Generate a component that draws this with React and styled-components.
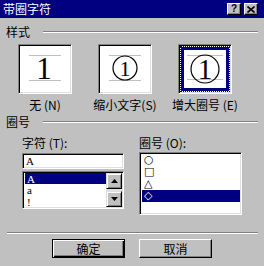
import styled, { createGlobalStyle } from "styled-components";

const GlobalStyle = createGlobalStyle`
  html, body {
    margin: 0;
    padding: 0;
    background: #c0c0c0;
  }
  body {
    font-family: "Noto Sans CJK SC", "DejaVu Sans", sans-serif;
    font-size: 12px;
    color: #000;
  }
`;

const Window = styled.div`
  width: 264px;
  height: 266px;
  background: #c0c0c0;
  overflow: hidden;
  display: flex;
  flex-direction: column;
`;

const TitleBar = styled.div`
  height: 18px;
  background: #000080;
  color: #fff;
  display: flex;
  align-items: center;
  justify-content: space-between;
  padding: 0 6px 0 3px;
  line-height: 12px;
`;

const TitleText = styled.span`
  font-size: 12px;
`;

const TitleButtons = styled.div`
  display: flex;
  gap: 3px;
`;

const TitleButton = styled.div`
  width: 14px;
  height: 12px;
  box-sizing: border-box;
  background: #c0c0c0;
  border: 1px solid;
  border-color: #fff #000 #000 #fff;
  box-shadow: inset -1px -1px #808080;
  display: flex;
  align-items: center;
  justify-content: center;
  color: #000;
  font-family: "Liberation Sans", sans-serif;
  font-weight: bold;
  font-size: 10px;
  line-height: 10px;
`;

const GroupHeader = styled.div`
  display: flex;
  align-items: center;
  height: 12px;
  padding: 0 6px;
  margin-top: ${(p) => p.$top}px;
`;

const GroupLabel = styled.span`
  line-height: 12px;
  margin-right: 13px;
`;

const Groove = styled.div`
  flex: 1;
  border-top: 1px solid #808080;
  border-bottom: 1px solid #fff;
`;

const StyleRow = styled.div`
  display: grid;
  grid-template-columns: 80px 80px 80px;
  padding-left: 5px;
  margin-top: 6px;
`;

const StyleItem = styled.div`
  display: flex;
  flex-direction: column;
  align-items: center;
`;

const Preview = styled.div`
  width: 54px;
  height: 50px;
  box-sizing: border-box;
  background: #fff;
  border: 1px solid;
  border-color: #808080 #fff #fff #808080;
  box-shadow: inset 1px 1px #000, inset -1px -1px #dfdfdf;
  padding: 1px;
  display: flex;
`;

const SelectedFrame = styled.div`
  flex: 1;
  display: flex;
  border: 1px dotted #000080;
  background: #fff;
`;

const SelectedInner = styled.div`
  flex: 1;
  display: flex;
  border: 3px solid #000080;
`;

const Glyph = styled.svg`
  display: block;
  flex: 1;
`;

const StyleCaption = styled.span`
  margin-top: 5px;
  line-height: 12px;
  white-space: nowrap;
`;

const Columns = styled.div`
  display: grid;
  grid-template-columns: 102px 103px;
  column-gap: 15px;
  padding-left: 22px;
  margin-top: 9px;
  align-items: start;
`;

const Column = styled.div`
  display: flex;
  flex-direction: column;
`;

const FieldLabel = styled.span`
  line-height: 12px;
  height: 12px;
  margin-bottom: ${(p) => p.$gap}px;
`;

const Sunken = styled.div`
  box-sizing: border-box;
  background: #fff;
  border: 1px solid;
  border-color: #808080 #fff #fff #808080;
  box-shadow: inset 1px 1px #000, inset -1px -1px #dfdfdf;
  padding: 2px;
`;

const TextInput = styled(Sunken)`
  height: 16px;
  padding: 2px 3px;
  font-family: "Liberation Serif", serif;
  font-size: 11px;
  line-height: 11px;
`;

const ListBox = styled(Sunken)`
  height: ${(p) => p.$h}px;
  margin-top: ${(p) => p.$top || 0}px;
  display: flex;
  padding: 1px 1px 1px 2px;
`;

const Rows = styled.div`
  flex: 1;
  display: flex;
  flex-direction: column;
`;

const Row = styled.div`
  height: 12px;
  line-height: 12px;
  overflow: hidden;
  padding-left: 2px;
  font-family: ${(p) =>
    p.$serif ? '"Liberation Serif", serif' : '"DejaVu Sans", sans-serif'};
  font-size: ${(p) => (p.$serif ? 11 : 11)}px;
  background: ${(p) => (p.$selected ? "#000080" : "transparent")};
  color: ${(p) => (p.$selected ? "#fff" : "#000")};
`;

const ScrollBar = styled.div`
  width: 16px;
  display: flex;
  flex-direction: column;
  justify-content: space-between;
  background: #e0e0e0;
`;

const ScrollButton = styled.div`
  width: 16px;
  height: 16px;
  box-sizing: border-box;
  background: #c0c0c0;
  border: 1px solid;
  border-color: #dfdfdf #000 #000 #dfdfdf;
  box-shadow: inset 1px 1px #fff, inset -1px -1px #808080;
  display: flex;
  align-items: center;
  justify-content: center;
`;

const Separator = styled.div`
  margin: 17px 6px 0 7px;
  border-top: 1px solid #808080;
  border-bottom: 1px solid #fff;
`;

const ButtonRow = styled.div`
  display: flex;
  justify-content: center;
  gap: 14px;
  margin-top: 5px;
`;

const Button = styled.div`
  width: 73px;
  height: 19px;
  box-sizing: border-box;
  background: #c0c0c0;
  display: flex;
  align-items: center;
  justify-content: center;
  line-height: 12px;
  border: 1px solid;
  border-color: ${(p) => (p.$default ? "#000" : "#fff #000 #000 #fff")};
  box-shadow: ${(p) =>
    p.$default
      ? "inset 1px 1px #fff, inset -1px -1px #000, inset -2px -2px #808080"
      : "inset -1px -1px #808080"};
`;

const Arrow = ({ down }) => (
  <svg width="7" height="4" viewBox="0 0 7 4">
    <polygon points={down ? "0,0 7,0 3.5,4" : "3.5,0 7,4 0,4"} fill="#000" />
  </svg>
);

const GuideLines = ({ x1, x2, y1, y2 }) => (
  <>
    <line x1={x1} x2={x2} y1={y1} y2={y1} stroke="#c0c0c0" strokeWidth="1" />
    <line x1={x1} x2={x2} y1={y2} y2={y2} stroke="#c0c0c0" strokeWidth="1" />
  </>
);

const App = () => {
  return (
    <Window>
      <GlobalStyle />
      <TitleBar>
        <TitleText>带圈字符</TitleText>
        <TitleButtons>
          <TitleButton>?</TitleButton>
          <TitleButton>
            <svg width="8" height="7" viewBox="0 0 8 7">
              <path d="M0.5 0.5 L7.5 6.5 M7.5 0.5 L0.5 6.5" stroke="#000" strokeWidth="1.6" />
            </svg>
          </TitleButton>
        </TitleButtons>
      </TitleBar>

      <GroupHeader $top={8}>
        <GroupLabel>样式</GroupLabel>
        <Groove />
      </GroupHeader>

      <StyleRow>
        <StyleItem>
          <Preview>
            <Glyph viewBox="0 0 50 46">
              <GuideLines x1={9} x2={41} y1={9.5} y2={34.5} />
              <text x="24" y="33" textAnchor="middle" fontFamily="Liberation Serif" fontSize="31">1</text>
            </Glyph>
          </Preview>
          <StyleCaption>无 (N)</StyleCaption>
        </StyleItem>
        <StyleItem>
          <Preview>
            <Glyph viewBox="0 0 50 46">
              <GuideLines x1={9} x2={41} y1={9.5} y2={34.5} />
              <circle cx="25" cy="22" r="12" fill="#fff" stroke="#000" strokeWidth="1.2" />
              <text x="25" y="30" textAnchor="middle" fontFamily="Liberation Serif" fontSize="22">1</text>
            </Glyph>
          </Preview>
          <StyleCaption>缩小文字(S)</StyleCaption>
        </StyleItem>
        <StyleItem>
          <Preview>
            <SelectedFrame>
              <SelectedInner>
                <Glyph viewBox="0 0 42 38">
                  <GuideLines x1={3} x2={39} y1={5.5} y2={29.5} />
                  <circle cx="21" cy="19" r="14" fill="none" stroke="#000" strokeWidth="1.2" />
                  <text x="21" y="29" textAnchor="middle" fontFamily="Liberation Serif" fontSize="29">1</text>
                </Glyph>
              </SelectedInner>
            </SelectedFrame>
          </Preview>
          <StyleCaption>增大圈号 (E)</StyleCaption>
        </StyleItem>
      </StyleRow>

      <GroupHeader $top={5}>
        <GroupLabel>圈号</GroupLabel>
        <Groove />
      </GroupHeader>

      <Columns>
        <Column>
          <FieldLabel $gap={4}>字符 (T):</FieldLabel>
          <TextInput>A</TextInput>
          <ListBox $h={38} $top={2}>
            <Rows>
              <Row $serif $selected>A</Row>
              <Row $serif>a</Row>
              <Row $serif>!</Row>
            </Rows>
            <ScrollBar>
              <ScrollButton><Arrow /></ScrollButton>
              <ScrollButton><Arrow down /></ScrollButton>
            </ScrollBar>
          </ListBox>
        </Column>
        <Column>
          <FieldLabel $gap={3}>圈号 (O):</FieldLabel>
          <ListBox $h={63}>
            <Rows>
              <Row>○</Row>
              <Row>□</Row>
              <Row>△</Row>
              <Row $selected>◇</Row>
            </Rows>
          </ListBox>
        </Column>
      </Columns>

      <Separator />

      <ButtonRow>
        <Button $default>确定</Button>
        <Button>取消</Button>
      </ButtonRow>
    </Window>
  );
};

export default App;
